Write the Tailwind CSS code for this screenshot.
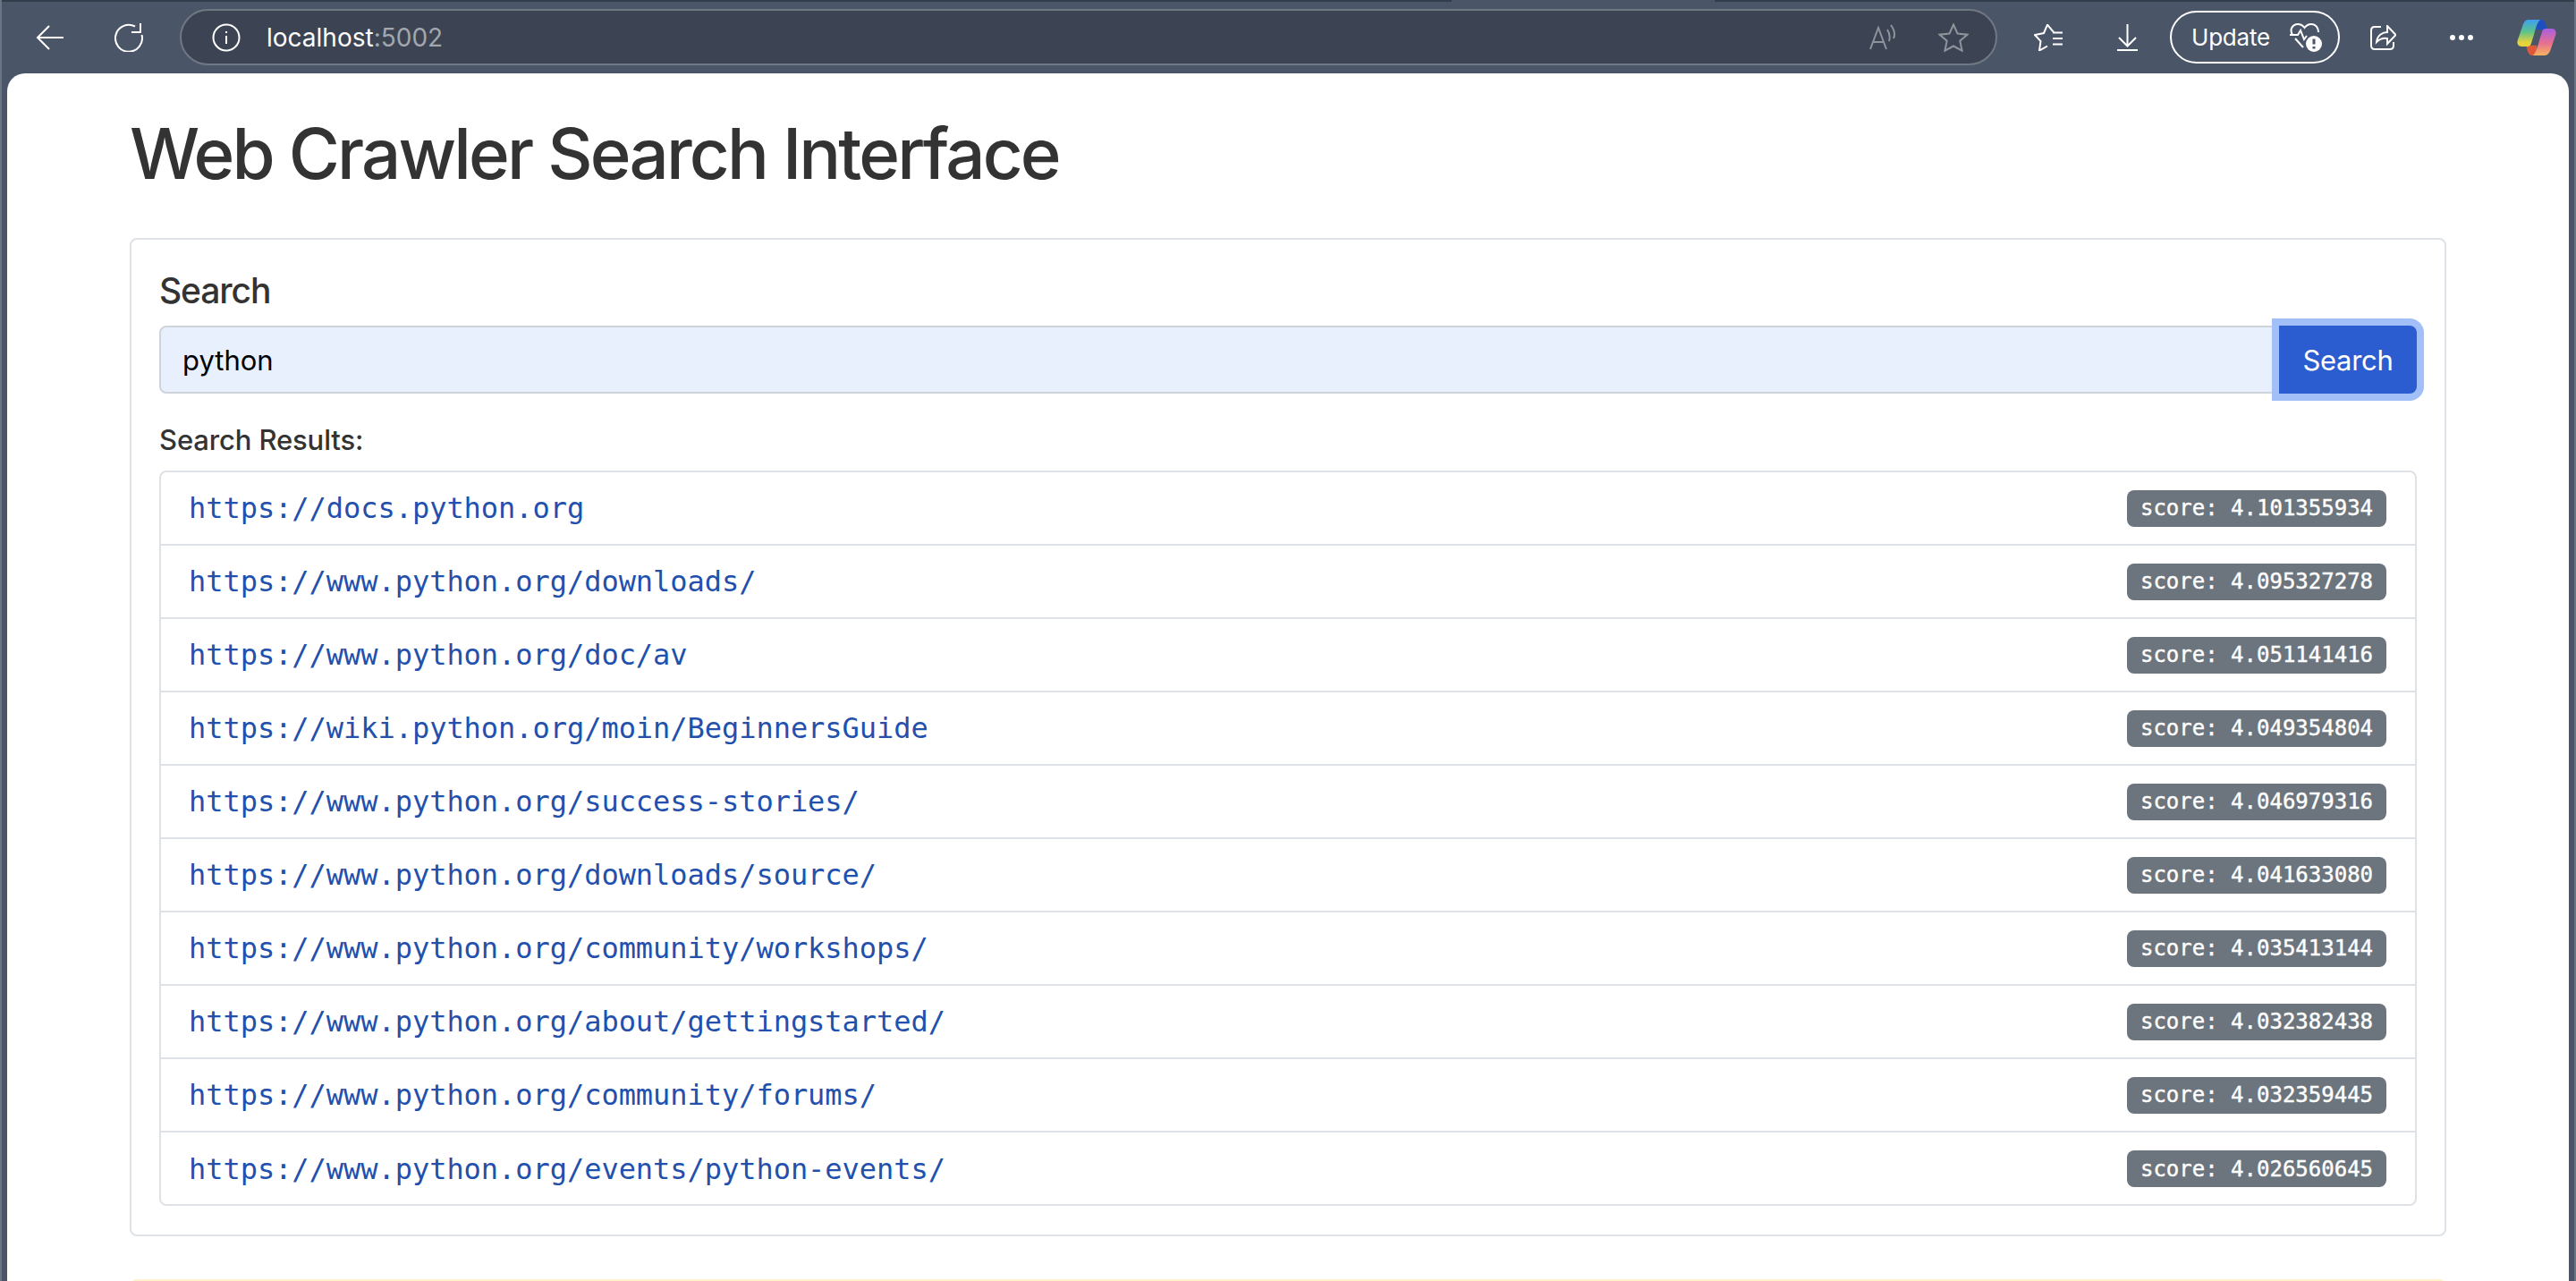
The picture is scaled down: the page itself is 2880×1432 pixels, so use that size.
<!doctype html>
<html>
<head>
  <meta charset="UTF-8">
  <script src="https://cdn.jsdelivr.net/npm/@tailwindcss/browser@4"></script>
  <title>Web Crawler Search Interface</title>
</head>
<body class="h-[1432px] overflow-hidden bg-[#4a5568] border-x-[2px] border-[#6b7482] font-['Inter',sans-serif]">
  <!-- browser toolbar -->
  <div class="h-[82px] pb-[1px] border-t-[2px] border-[#333c4b] flex items-center text-white relative">
    <div class="absolute left-[1621px] -top-[2px] w-[294px] h-[2px] bg-[#4a5568]"></div>
    <svg class="ml-[38px] w-[31px] h-[28px]" viewBox="0 0 31 28" fill="none" stroke="white" stroke-width="2"><path d="M31 14H2M15 1 2 14l13 13"/></svg>
    <svg class="ml-[57px] w-[32px] h-[32px]" viewBox="0 0 32 32" fill="none" stroke="white" stroke-width="2"><path d="M30.500 13A15 15 0 1 1 23 3.500"/><path d="M29 0v10H19"/></svg>
    <div class="ml-[41px] w-[2032px] h-[63px] rounded-full bg-[#3c4352] border-[2px] border-[#6f7883] flex items-center">
      <svg class="ml-[34px] w-[32px] h-[32px]" viewBox="0 0 32 32" fill="none" stroke="white" stroke-width="2"><circle cx="16" cy="16" r="14.500"/><path d="M16 14v9M16 9v2"/></svg>
      <span class="ml-[29px] pt-[1px] text-[28px] leading-none">localhost<span class="text-[#a3a7ae]">:5002</span></span>
      <div class="ml-auto flex items-center gap-[47px] pr-[30px]">
        <svg class="w-[30px] h-[29px]" viewBox="0 0 30 29" fill="none" stroke="#8f949c" stroke-width="2"><path d="M1 28 10 4l9 24M4 20h12M20 6q4 6 2 13M24 1q6 8 3 15"/></svg>
        <svg class="w-[34px] h-[32px]" viewBox="0 0 34 32" fill="none" stroke="#8f949c" stroke-width="2"><path d="m17 1.500 4.500 10 11 1.200-8.200 7 2.300 11L17 25.500l-9.600 5.200 2.300-11-8.200-7 11-1.200z"/></svg>
      </div>
    </div>
    <svg class="ml-[41px] w-[32px] h-[30px]" viewBox="0 0 32 30" fill="none" stroke="white" stroke-width="2"><path d="M22 9 15 .7 11 10 1 12l6.500 7L6 29.500l9-5M21 9.500h11M21 16h11M21 22.500h11"/></svg>
    <svg class="ml-[61px] w-[23px] h-[30px]" viewBox="0 0 23 30" fill="none" stroke="white" stroke-width="2"><path d="M11.500 0v24M2 15l9.500 9.500L21 15M0 29h23"/></svg>
    <div class="ml-[36px] w-[190px] h-[59px] rounded-full border-[2px] border-white flex items-center pl-[22px]">
      <span class="text-[26px] leading-none tracking-[-0.200px]">Update</span>
      <svg class="ml-[22px] w-[36px] h-[32px]" viewBox="0 0 36 32" fill="none" stroke="white" stroke-width="2"><path d="M3 13C-1 6 4 1 9 1c3 0 6 2 7.500 4C18 3 21 1 24 1c5 0 8 4 8 9M6 17l9 10M0 13h9l3-5 4 10 3-4"/><circle cx="27" cy="23" r="9" fill="white" stroke="none"/><path d="M27 17.500v6M27 26v2.500" stroke="#4a5568" stroke-width="3"/></svg>
    </div>
    <svg class="ml-[34px] w-[29px] h-[28px]" viewBox="0 0 29 28" fill="none" stroke="white" stroke-width="2"><path d="M12 2H5Q1 2 1 6v17q0 4 4 4h17q4 0 4-4v-4"/><path d="M7 19c1-8 7-11 12-11V1l9.500 10L19 21v-6c-5-1-9 1-12 4z"/></svg>
    <div class="ml-[60px] flex gap-[4px]"><i class="w-[6px] h-[6px] rounded-full bg-white"></i><i class="w-[6px] h-[6px] rounded-full bg-white"></i><i class="w-[6px] h-[6px] rounded-full bg-white"></i></div>
    <svg class="ml-[49px] w-[44px] h-[40px]" viewBox="0 0 130 120">
      <defs>
        <linearGradient id="cpa" x1="0" y1="0" x2="0" y2="1"><stop offset="0" stop-color="#3f9df0"/><stop offset=".45" stop-color="#5cc48a"/><stop offset=".85" stop-color="#e6d23a"/></linearGradient>
        <linearGradient id="cpb" x1="0" y1="0" x2="0" y2="1"><stop offset="0" stop-color="#a95fe0"/><stop offset=".55" stop-color="#e8708e"/><stop offset="1" stop-color="#f8b460"/></linearGradient>
      </defs>
      <path d="M64 0h16c12 0 16 14 20 34H64z" fill="#1d4fc0"/>
      <path d="M66 120H50c-12 0-16-14-20-34h36z" fill="#e0583a"/>
      <path d="M38 0h40c-8 4-14 20-22 50l-10 32q-2 8-10 8H14C4 90-2 82 1 70L18 20C22 8 28 0 38 0z" fill="url(#cpa)"/>
      <path d="M92 120H52c8-4 14-20 22-50l10-32q2-8 10-8h22c10 0 16 8 13 20l-17 50c-4 12-10 20-20 20z" fill="url(#cpb)"/>
    </svg>
  </div>

  <!-- page -->
  <div class="mx-[6px] h-[1350px] rounded-t-[20px] bg-white px-[137px] overflow-hidden text-[#333333]">
    <h1 class="pt-[42px] text-[78px] leading-[96px] font-medium tracking-[-2.860px]">Web Crawler Search Interface</h1>
    <div class="mt-[46px] rounded-[8px] border-[2px] border-[#dee2e6] px-[31px] h-[1116px]">
      <h5 class="pt-[33px] text-[39px] leading-[48px] font-medium tracking-[-1.100px]">Search</h5>
      <div class="mt-[15px] flex h-[76px]">
        <div class="flex-1 rounded-l-[8px] border-[2px] border-[#ced4da] bg-[#e8f0fe] pl-[24px] pt-[2px] flex items-center text-[31px] text-black">python</div>
        <button class="relative w-[154px] pt-[2px] rounded-r-[8px] bg-[#2b5dd1] text-white text-[31px] tracking-[-0.300px] ring-[8px] ring-[#a2bff8]">Search</button>
      </div>
      <h6 class="mt-[33px] text-[31px] leading-[38px] font-medium tracking-[-0.130px]">Search Results:</h6>
      <ul class="mt-[15px] rounded-[8px] border-[2px] border-[#dee2e6] divide-y-[2px] divide-[#dee2e6] font-['DejaVu_Sans_Mono',monospace]">
        <li class="h-[82px] flex items-center justify-between pl-[31px] pr-[32px]"><a class="text-[32px] tracking-[-0.040px] text-[#2250ac]">https://docs.python.org</a><span class="w-[290px] h-[41px] rounded-[8px] bg-[#6c757d] text-white text-[24px] [-webkit-text-stroke:0.4px_white] flex items-center justify-center">score: 4.101355934</span></li>
        <li class="h-[82px] flex items-center justify-between pl-[31px] pr-[32px]"><a class="text-[32px] tracking-[-0.040px] text-[#2250ac]">https://www.python.org/downloads/</a><span class="w-[290px] h-[41px] rounded-[8px] bg-[#6c757d] text-white text-[24px] [-webkit-text-stroke:0.4px_white] flex items-center justify-center">score: 4.095327278</span></li>
        <li class="h-[82px] flex items-center justify-between pl-[31px] pr-[32px]"><a class="text-[32px] tracking-[-0.040px] text-[#2250ac]">https://www.python.org/doc/av</a><span class="w-[290px] h-[41px] rounded-[8px] bg-[#6c757d] text-white text-[24px] [-webkit-text-stroke:0.4px_white] flex items-center justify-center">score: 4.051141416</span></li>
        <li class="h-[82px] flex items-center justify-between pl-[31px] pr-[32px]"><a class="text-[32px] tracking-[-0.040px] text-[#2250ac]">https://wiki.python.org/moin/BeginnersGuide</a><span class="w-[290px] h-[41px] rounded-[8px] bg-[#6c757d] text-white text-[24px] [-webkit-text-stroke:0.4px_white] flex items-center justify-center">score: 4.049354804</span></li>
        <li class="h-[82px] flex items-center justify-between pl-[31px] pr-[32px]"><a class="text-[32px] tracking-[-0.040px] text-[#2250ac]">https://www.python.org/success-stories/</a><span class="w-[290px] h-[41px] rounded-[8px] bg-[#6c757d] text-white text-[24px] [-webkit-text-stroke:0.4px_white] flex items-center justify-center">score: 4.046979316</span></li>
        <li class="h-[82px] flex items-center justify-between pl-[31px] pr-[32px]"><a class="text-[32px] tracking-[-0.040px] text-[#2250ac]">https://www.python.org/downloads/source/</a><span class="w-[290px] h-[41px] rounded-[8px] bg-[#6c757d] text-white text-[24px] [-webkit-text-stroke:0.4px_white] flex items-center justify-center">score: 4.041633080</span></li>
        <li class="h-[82px] flex items-center justify-between pl-[31px] pr-[32px]"><a class="text-[32px] tracking-[-0.040px] text-[#2250ac]">https://www.python.org/community/workshops/</a><span class="w-[290px] h-[41px] rounded-[8px] bg-[#6c757d] text-white text-[24px] [-webkit-text-stroke:0.4px_white] flex items-center justify-center">score: 4.035413144</span></li>
        <li class="h-[82px] flex items-center justify-between pl-[31px] pr-[32px]"><a class="text-[32px] tracking-[-0.040px] text-[#2250ac]">https://www.python.org/about/gettingstarted/</a><span class="w-[290px] h-[41px] rounded-[8px] bg-[#6c757d] text-white text-[24px] [-webkit-text-stroke:0.4px_white] flex items-center justify-center">score: 4.032382438</span></li>
        <li class="h-[82px] flex items-center justify-between pl-[31px] pr-[32px]"><a class="text-[32px] tracking-[-0.040px] text-[#2250ac]">https://www.python.org/community/forums/</a><span class="w-[290px] h-[41px] rounded-[8px] bg-[#6c757d] text-white text-[24px] [-webkit-text-stroke:0.4px_white] flex items-center justify-center">score: 4.032359445</span></li>
        <li class="h-[80px] pt-[1px] flex items-center justify-between pl-[31px] pr-[32px]"><a class="text-[32px] tracking-[-0.040px] text-[#2250ac]">https://www.python.org/events/python-events/</a><span class="w-[290px] h-[41px] rounded-[8px] bg-[#6c757d] text-white text-[24px] [-webkit-text-stroke:0.4px_white] flex items-center justify-center">score: 4.026560645</span></li>
      </ul>
    </div>
    <div class="mt-[48px] h-[40px] rounded-[8px] border-[2px] border-[#fff3cd] bg-[#fff3cd]"></div>
  </div>
</body>
</html>
